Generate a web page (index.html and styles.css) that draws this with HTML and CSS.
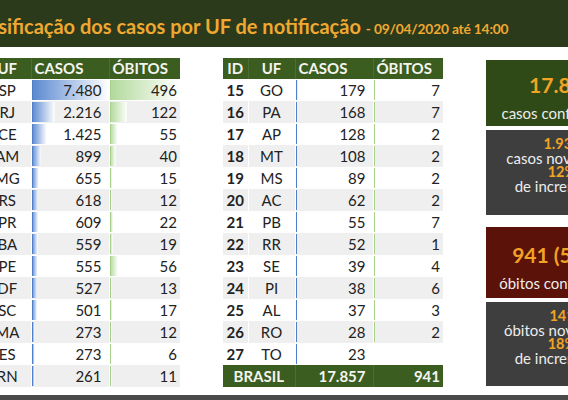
FILE: index.html
```html
<!DOCTYPE html>
<html lang="pt-BR">
<head>
<meta charset="utf-8">
<title>Classificação dos casos por UF</title>
<link rel="stylesheet" href="styles.css">
</head>
<body>
<div class="slide">
  <header class="top">
    <h1 class="title">Classificação dos casos por UF de notificação <span class="date">- 09/04/2020 até 14:00</span></h1>
  </header>
  <main class="content">
    <table class="uf-table left">
      <colgroup><col class="c-uf"><col class="c-cases"><col class="c-deaths"></colgroup>
      <thead><tr><th class="uf">UF</th><th>CASOS</th><th>ÓBITOS</th></tr></thead>
      <tbody>
        <tr><td class="uf">SP</td><td class="num bar-c" style="--w:100%">7.480</td><td class="num bar-d" style="--w:100%">496</td></tr>
        <tr><td class="uf">RJ</td><td class="num bar-c" style="--w:29.6%">2.216</td><td class="num bar-d" style="--w:24.6%">122</td></tr>
        <tr><td class="uf">CE</td><td class="num bar-c" style="--w:19.1%">1.425</td><td class="num bar-d" style="--w:11.1%">55</td></tr>
        <tr><td class="uf">AM</td><td class="num bar-c" style="--w:12%">899</td><td class="num bar-d" style="--w:8.1%">40</td></tr>
        <tr><td class="uf">MG</td><td class="num bar-c" style="--w:8.8%">655</td><td class="num bar-d" style="--w:3%">15</td></tr>
        <tr><td class="uf">RS</td><td class="num bar-c" style="--w:8.3%">618</td><td class="num bar-d" style="--w:2.4%">12</td></tr>
        <tr><td class="uf">PR</td><td class="num bar-c" style="--w:8.1%">609</td><td class="num bar-d" style="--w:4.4%">22</td></tr>
        <tr><td class="uf">BA</td><td class="num bar-c" style="--w:7.5%">559</td><td class="num bar-d" style="--w:3.8%">19</td></tr>
        <tr><td class="uf">PE</td><td class="num bar-c" style="--w:7.4%">555</td><td class="num bar-d" style="--w:11.3%">56</td></tr>
        <tr><td class="uf">DF</td><td class="num bar-c" style="--w:7%">527</td><td class="num bar-d" style="--w:2.6%">13</td></tr>
        <tr><td class="uf">SC</td><td class="num bar-c" style="--w:6.7%">501</td><td class="num bar-d" style="--w:3.4%">17</td></tr>
        <tr><td class="uf">MA</td><td class="num bar-c" style="--w:3.6%">273</td><td class="num bar-d" style="--w:2.4%">12</td></tr>
        <tr><td class="uf">ES</td><td class="num bar-c" style="--w:3.6%">273</td><td class="num bar-d" style="--w:1.2%">6</td></tr>
        <tr><td class="uf">RN</td><td class="num bar-c" style="--w:3.5%">261</td><td class="num bar-d" style="--w:2.2%">11</td></tr>
      </tbody>
    </table>

    <table class="uf-table right">
      <colgroup><col class="c-id"><col class="c-uf"><col class="c-cases"><col class="c-deaths2"></colgroup>
      <thead><tr><th class="id">ID</th><th class="uf">UF</th><th>CASOS</th><th>ÓBITOS</th></tr></thead>
      <tbody>
        <tr><td class="id">15</td><td class="uf">GO</td><td class="num bar-c" style="--w:2.4%">179</td><td class="num bar-d" style="--w:1.4%">7</td></tr>
        <tr><td class="id">16</td><td class="uf">PA</td><td class="num bar-c" style="--w:2.2%">168</td><td class="num bar-d" style="--w:1.4%">7</td></tr>
        <tr><td class="id">17</td><td class="uf">AP</td><td class="num bar-c" style="--w:1.7%">128</td><td class="num bar-d" style="--w:0.4%">2</td></tr>
        <tr><td class="id">18</td><td class="uf">MT</td><td class="num bar-c" style="--w:1.4%">108</td><td class="num bar-d" style="--w:0.4%">2</td></tr>
        <tr><td class="id">19</td><td class="uf">MS</td><td class="num bar-c" style="--w:1.2%">89</td><td class="num bar-d" style="--w:0.4%">2</td></tr>
        <tr><td class="id">20</td><td class="uf">AC</td><td class="num bar-c" style="--w:1%">62</td><td class="num bar-d" style="--w:0.4%">2</td></tr>
        <tr><td class="id">21</td><td class="uf">PB</td><td class="num bar-c" style="--w:1%">55</td><td class="num bar-d" style="--w:1.4%">7</td></tr>
        <tr><td class="id">22</td><td class="uf">RR</td><td class="num bar-c" style="--w:1%">52</td><td class="num bar-d" style="--w:0.2%">1</td></tr>
        <tr><td class="id">23</td><td class="uf">SE</td><td class="num bar-c" style="--w:1%">39</td><td class="num bar-d" style="--w:0.8%">4</td></tr>
        <tr><td class="id">24</td><td class="uf">PI</td><td class="num bar-c" style="--w:1%">38</td><td class="num bar-d" style="--w:1.2%">6</td></tr>
        <tr><td class="id">25</td><td class="uf">AL</td><td class="num bar-c" style="--w:1%">37</td><td class="num bar-d" style="--w:0.6%">3</td></tr>
        <tr><td class="id">26</td><td class="uf">RO</td><td class="num bar-c" style="--w:1%">28</td><td class="num bar-d" style="--w:0.4%">2</td></tr>
        <tr><td class="id">27</td><td class="uf">TO</td><td class="num bar-c" style="--w:1%">23</td><td class="num"></td></tr>
      </tbody>
      <tfoot><tr><td class="total-label" colspan="2">BRASIL</td><td class="num">17.857</td><td class="num">941</td></tr></tfoot>
    </table>

    <aside class="cards">
      <div class="card card-green">
        <div class="big">17.857</div>
        <div class="label">casos confirmados</div>
      </div>
      <div class="card card-gray">
        <div class="mid">1.930</div>
        <div class="label">casos novos hoje</div>
        <div class="mid">12%</div>
        <div class="label">de incremento</div>
      </div>
      <div class="card card-red">
        <div class="big">941 (5,3%)</div>
        <div class="label">óbitos confirmados</div>
      </div>
      <div class="card card-gray">
        <div class="mid">141</div>
        <div class="label">óbitos novos hoje</div>
        <div class="mid">18%</div>
        <div class="label">de incremento</div>
      </div>
    </aside>
  </main>
  <div class="bottom-bar"></div>
</div>
</body>
</html>
```

FILE: styles.css
```css
* { box-sizing: border-box; }
html, body { margin: 0; padding: 0; background: #ffffff; }
.slide {
  width: 568px;
  height: 400px;
  overflow: hidden;
  display: flex;
  flex-direction: column;
  font-family: Lato, "Noto Sans", sans-serif;
  background: #ffffff;
}
.top {
  height: 47px;
  flex: none;
  background: #2b3a1b;
  display: flex;
  align-items: center;
  padding-top: 4px;
  overflow: hidden;
}
.title {
  margin: 0 0 0 -39px;
  white-space: nowrap;
  font-size: 20px;
  font-weight: 700;
  color: #f0a830;
}
.date { font-size: 13.8px; letter-spacing: -0.2px; }

.content {
  flex: 1;
  display: flex;
  align-items: flex-start;
  padding-top: 11px;
  overflow: hidden;
}

.uf-table {
  border-collapse: collapse;
  table-layout: fixed;
  flex: none;
  font-size: 15px;
  color: #222;
}
.left { margin-left: -16px; width: 196px; }
.right { margin-left: 43px; width: 220px; }
.c-id { width: 25px; }
.c-uf { width: 47px; }
.c-cases { width: 78px; }
.c-deaths { width: 71px; }
.c-deaths2 { width: 70px; }

.uf-table th {
  height: 21px;
  padding: 0 0 0 3px;
  background: #3b5d20;
  color: #f4f4f0;
  font-weight: 700;
  text-align: left;
  border-left: 1px solid #4d6d33;
  line-height: 21px;
}
.uf-table th:first-child { border-left: none; }
.uf-table th.uf, .uf-table th.id { text-align: center; padding: 0; }

.uf-table td {
  height: 22px;
  padding: 0;
  line-height: 22px;
  border-left: 1px solid #ffffff;
  white-space: nowrap;
}
.uf-table td:first-child { border-left: none; }
.uf-table tbody tr:nth-child(even) td { background-color: #efefef; }

.uf-table td.uf, .uf-table td.id { text-align: center; }
.uf-table td.id { font-weight: 700; }
.uf-table td.num { text-align: right; padding-right: 7px; }
.uf-table td.num:last-child { padding-right: 3px; }

.bar-c {
  background-image: linear-gradient(#4f7fc9, #4f7fc9), linear-gradient(to right, #5a88d0, #ffffff);
  background-size: 1px calc(100% - 2px), var(--w) calc(100% - 2px);
  background-position: left center, left center;
  background-repeat: no-repeat;
}
.bar-d {
  background-image: linear-gradient(#a7d08c, #a7d08c), linear-gradient(to right, #b1d99a, #ffffff);
  background-size: 1px calc(100% - 2px), var(--w) calc(100% - 2px);
  background-position: left center, left center;
  background-repeat: no-repeat;
}

.uf-table tfoot td {
  background: #3b5d20;
  color: #f4f4f0;
  font-weight: 700;
  border-left: 1px solid #4d6d33;
}
.uf-table tfoot td:first-child { border-left: none; }
.uf-table td.total-label { text-align: center; }

.cards {
  flex: none;
  width: 152px;
  margin-left: 43px;
  margin-top: 2px;
  display: flex;
  flex-direction: column;
}
.card {
  text-align: center;
  color: #ececec;
  white-space: nowrap;
  font-size: 15px;
}
.card-green { background: #2f4a17; height: 66px; padding-top: 13px; }
.card-red { background: #5a1209; height: 71px; padding-top: 16px; margin-top: 12px; }
.card-gray { background: #3e3e3e; height: 85px; padding-top: 7px; margin-top: 4px; }
.card-red + .card-gray { height: 84px; }
.big { font-size: 21px; font-weight: 700; color: #f2a324; line-height: 24px; }
.card-green .label, .card-red .label { margin-top: 8px; line-height: 16px; }
.mid { font-size: 14.5px; font-weight: 700; color: #f2a324; line-height: 14px; }
.card-gray .label { line-height: 14px; }

.bottom-bar {
  height: 5px;
  flex: none;
  background: #4a4a4a;
}
```
